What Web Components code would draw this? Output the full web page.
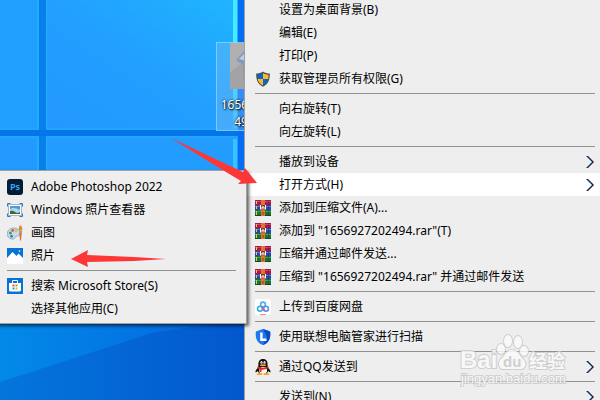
<!DOCTYPE html>
<html lang="zh-CN">
<head>
<meta charset="utf-8">
<title>打开方式</title>
<style>
  body {
    margin: 0;
    font-family: "Noto Sans", "Noto Sans CJK SC", sans-serif;
    font-size: 12px;
  }
</style>
</head>
<body>
<desktop-screen>
  <desktop-file slot="file" name="1656927202494.jpg"></desktop-file>

  <context-menu slot="menu" label="文件菜单">
    <menu-item>设置为桌面背景(B)</menu-item>
    <menu-item>编辑(E)</menu-item>
    <menu-item>打印(P)</menu-item>
    <menu-item icon="shield">获取管理员所有权限(G)</menu-item>
    <menu-separator></menu-separator>
    <menu-item>向右旋转(T)</menu-item>
    <menu-item>向左旋转(L)</menu-item>
    <menu-separator></menu-separator>
    <menu-item more>播放到设备</menu-item>
    <menu-item more active>打开方式(H)</menu-item>
    <menu-item icon="rar">添加到压缩文件(A)...</menu-item>
    <menu-item icon="rar">添加到 "1656927202494.rar"(T)</menu-item>
    <menu-item icon="rar">压缩并通过邮件发送...</menu-item>
    <menu-item icon="rar">压缩到 "1656927202494.rar" 并通过邮件发送</menu-item>
    <menu-separator></menu-separator>
    <menu-item icon="netdisk">上传到百度网盘</menu-item>
    <menu-separator></menu-separator>
    <menu-item icon="lenovo">使用联想电脑管家进行扫描</menu-item>
    <menu-separator></menu-separator>
    <menu-item icon="qq" more>通过QQ发送到</menu-item>
    <menu-separator></menu-separator>
    <menu-item more>发送到(N)</menu-item>
  </context-menu>

  <context-menu slot="submenu" label="打开方式">
    <menu-item icon="ps">Adobe Photoshop 2022</menu-item>
    <menu-item icon="viewer">Windows 照片查看器</menu-item>
    <menu-item icon="paint">画图</menu-item>
    <menu-item icon="photos">照片</menu-item>
    <menu-separator></menu-separator>
    <menu-item icon="store">搜索 Microsoft Store(S)</menu-item>
    <menu-item>选择其他应用(C)</menu-item>
  </context-menu>

  <red-arrows slot="overlay"></red-arrows>
  <baidu-mark slot="overlay"></baidu-mark>
</desktop-screen>

<script>
const icons = {
  shield: `
    <path d="M8 .5C6 2 3.500 2.500 1.200 2.500C1 9 3 13.500 8 15.700C13 13.500 15 9 14.800 2.500C12.500 2.500 10 2 8 .5Z" fill="#4b4f50"/>
    <path d="M8 2C6.300 3.100 4.500 3.600 2.600 3.700V8H8Z" fill="#0c66c9"/>
    <path d="M8 2C9.700 3.100 11.500 3.600 13.400 3.700V8H8Z" fill="#fdb827"/>
    <path d="M2.600 8C3.200 11 5 13.200 8 14.400V8Z" fill="#fdb827"/>
    <path d="M13.400 8C12.800 11 11 13.200 8 14.400V8Z" fill="#0c66c9"/>`,
  rar: `
    <rect width="16" height="5" y="0" fill="#a51c4b"/>
    <rect width="16" height="1" y="1" fill="#d2416d"/>
    <rect width="16" height="5" y="5" fill="#2b45ae"/>
    <rect width="16" height="1" y="6" fill="#5877dc"/>
    <rect width="16" height="6" y="10" fill="#14743b"/>
    <rect width="16" height="1" y="11" fill="#35a45c"/>
    <rect width="16" height="1" y="15" fill="#0b4d28"/>
    <path d="M1.500 1v3M1.500 6v3M1.500 11v4" stroke="#efc63c"/>
    <path d="M13.500 0v16" stroke="#222" opacity=".3"/>
    <rect x="6" width="4" height="16" fill="#e5722a"/>
    <rect x="5" y="5" width="6" height="5" fill="#8a3a22"/>
    <path d="M5.500 5v4.500M10.500 5v4.500M7 9.500V7h2v2.500" stroke="#fff" fill="none"/>
    <rect x="7" y="12" width="2" height="3" fill="#c9531d"/>`,
  netdisk: `
    <rect width="16" height="16" rx="3" fill="#fff"/>
    <circle cx="8" cy="5.500" r="2.400" fill="none" stroke="#4aaef0" stroke-width="1.600"/>
    <circle cx="5" cy="9.700" r="2.400" fill="none" stroke="#28b3ee" stroke-width="1.600"/>
    <circle cx="11" cy="9.700" r="2.400" fill="none" stroke="#4f94f5" stroke-width="1.600"/>
    <path d="M6.200 7.500L9.800 11.500" stroke="#f25574" stroke-width="1.600"/>
    <path d="M5 15.500h6" stroke="#e98b9b"/>`,
  lenovo: `
    <path d="M8 0L1.500 2.200Q.5 2.600 .7 4C.5 10 2.500 14 8 16C13.500 14 15.500 10 15.300 4Q15.500 2.600 14.500 2.200Z" fill="#1b78f2"/>
    <path d="M8 0L14.500 2.200Q15.500 2.600 15.300 4C15.500 10 13.500 14 8 16L12 8Z" fill="#0a4cc0"/>
    <path d="M6.400 3.500V10.800H11.500" fill="none" stroke="#fff" stroke-width="2.400"/>`,
  qq: `
    <path d="M3 9Q-.5 11.500 .8 13.500L3 12ZM13 9Q16.500 11.500 15.200 13.500L13 12Z" fill="#111"/>
    <path d="M8 0C4.500 0 3.200 2.600 3.400 6.500L2.500 10C2.500 14 5 15 8 15C11 15 13.500 14 13.500 10L12.600 6.500C12.800 2.600 11.500 0 8 0Z" fill="#111"/>
    <ellipse cx="8" cy="11.500" rx="4" ry="3.400" fill="#fff"/>
    <ellipse cx="6.500" cy="3.600" rx="1.100" ry="1.600" fill="#fff"/>
    <ellipse cx="9.500" cy="3.600" rx="1.100" ry="1.600" fill="#fff"/>
    <circle cx="6.800" cy="3.900" r=".5"/><circle cx="9.200" cy="3.900" r=".5"/>
    <ellipse cx="8" cy="6.200" rx="3.200" ry="1" fill="#f7a51c"/>
    <path d="M2.800 7.300Q8 10.300 13.200 7.300L13.600 9Q8 11.500 6.500 10.500V13H4.500V10Q3 9.600 2.400 9Z" fill="#e5232b"/>
    <ellipse cx="4.600" cy="15" rx="3" ry="1.100" fill="#f7a51c"/>
    <ellipse cx="11.400" cy="15" rx="3" ry="1.100" fill="#f7a51c"/>`,
  ps: `
    <rect width="16" height="16" rx="3" fill="#001d34"/>
    <text x="8" y="11" font-family="Open Sans, sans-serif" font-size="9" font-weight="700" text-anchor="middle" fill="#35a5f8">Ps</text>`,
  viewer: `
    <rect x="1.500" y="2.500" width="13" height="11" fill="#fff" stroke="#aab4bd"/>
    <rect x="3" y="4" width="10" height="8" fill="#4f9bd8"/>
    <path d="M3 7Q7 4.500 13 8V12H3Z" fill="#a9d8ee"/>
    <path d="M3 9Q6 8 8 10T13 10V12H3Z" fill="#356b3c"/>
    <path d="M.5 4.500V1.500H3.500M12.500 1.500H15.500V4.500M.5 11.500V14.500H3.500M12.500 14.500H15.500V11.500" fill="none" stroke="#2c78c4"/>`,
  paint: `
    <path d="M7 3C2.500 3 0 6 .3 9.500C.6 13 3.800 14.500 6.500 14C8.500 13.600 7.500 11.700 9 11.200C11 10.600 12.800 11 13 8.500C13.200 5 10.500 3 7 3Z" fill="#c4dcec" stroke="#7da3bd" stroke-width=".8"/>
    <circle cx="3.400" cy="8" r="1.500" fill="#45a548"/>
    <circle cx="5.700" cy="5.400" r="1.300" fill="#e04b37"/>
    <circle cx="9" cy="5.600" r="1.400" fill="#f1b52b"/>
    <circle cx="4.600" cy="11.300" r="1.400" fill="#2f78c8"/>
    <path d="M12.600 0Q15.800 1 15.300 5.500L12 5.800Q11.500 3 12.600 0Z" fill="#e28a2e"/>
    <path d="M12 6H15.200L14.800 8H12.300Z" fill="#8da2b0"/>
    <path d="M12.300 8H14.800L14 15.500H13Z" fill="#e66f1e"/>`,
  photos: `
    <rect width="16" height="16" fill="#fff"/>
    <path d="M0 0H16V10L11.500 5.500L9.500 8L5.500 4L0 10Z" fill="#0873d4"/>
    <path d="M0 11L5.500 5L15 15.500H0ZM10 9L11.500 7L16 11.500V15.500Z" fill="#fff"/>
    <circle cx="12.500" cy="3" r=".8" fill="#fff"/>`,
  store: `
    <rect width="16" height="16" fill="#0873d4"/>
    <path d="M5.500 5V2.500H10.500V5" fill="none" stroke="#fff"/>
    <path d="M2 5H14V12Q14 13.500 12.500 13.500H3.500Q2 13.500 2 12Z" fill="#fff"/>
    <path d="M5.500 6.500h2v2h-2z" fill="#ef4f29"/><path d="M8.500 6.500h2v2h-2z" fill="#7cb721"/>
    <path d="M5.500 9.500h2v2h-2z" fill="#18a1e3"/><path d="M8.500 9.500h2v2h-2z" fill="#f7b51a"/>`
};

class DesktopScreen extends HTMLElement {
  constructor() {
    super();
    this.attachShadow({ mode: "open" }).innerHTML = `
      <style>
        :host {
          display: block;
          position: relative;
          height: 100vh;
          overflow: hidden;
          background: #0a6ce0;
        }
        .wallpaper {
          position: absolute;
          inset: 0;
          width: 100%;
          height: 100%;
        }
        ::slotted([slot="file"]) {
          position: absolute;
          left: 216px;
          top: 42px;
        }
        ::slotted([slot="menu"]) {
          position: absolute;
          left: 244px;
          right: -6px;
          top: -7px;
        }
        ::slotted([slot="submenu"]) {
          position: absolute;
          left: -4px;
          width: 251px;
          top: 170px;
          box-sizing: border-box;
          box-shadow: 2px 2px 3px rgba(0, 0, 0, 0.6);
        }
      </style>
      <svg class="wallpaper" viewBox="0 0 600 400" preserveAspectRatio="xMinYMin slice" aria-hidden="true">
        <defs>
          <linearGradient id="glass" x1="0" y1="1" x2="1" y2="0">
            <stop offset="0" stop-color="#2399ff"/>
            <stop offset=".5" stop-color="#229fff"/>
            <stop offset="1" stop-color="#1fb5ff"/>
          </linearGradient>
          <linearGradient id="floor">
            <stop offset="0" stop-color="#028ae8"/>
            <stop offset="1" stop-color="#0560df"/>
          </linearGradient>
          <linearGradient id="dark">
            <stop offset="0" stop-color="#0476dc"/>
            <stop offset="1" stop-color="#0355cd"/>
          </linearGradient>
          <linearGradient id="edge" x1="0" y1="0" x2="0" y2="1">
            <stop offset="0" stop-color="#3fe9ff"/>
            <stop offset=".6" stop-color="#4bf0ff"/>
            <stop offset="1" stop-color="#34bdff"/>
          </linearGradient>
        </defs>
        <rect width="600" height="400" fill="#0a78ea"/>
        <rect width="38" height="129" fill="#209fff"/>
        <rect y="137" width="38" height="100" fill="#239aff"/>
        <rect x="46" width="192" height="129" fill="url(#glass)"/>
        <rect x="46" y="137" width="192" height="100" fill="#239cff"/>
        <path d="M38 0V129M38 137V180M46 0V129M46 137V180" stroke="#22adff" stroke-width="2"/>
        <path d="M0 129H238M0 137H238" stroke="#20a6ff" stroke-width="2"/>
        <rect x="233" width="4" height="128" fill="url(#edge)"/>
        <rect x="233" y="139" width="4" height="40" fill="#34c4ff"/>
        <rect x="39" width="7" height="180" fill="#087fea"/>
        <rect y="130" width="244" height="6" fill="#0675e8"/>
        <rect x="238" width="8" height="180" fill="#066cf3"/>
        <rect y="320" width="260" height="80" fill="url(#floor)"/>
        <path d="M0 382L155 332L260 318V400H0Z" fill="url(#dark)"/>
      </svg>
      <slot name="file"></slot>
      <slot name="menu"></slot>
      <slot name="submenu"></slot>
      <slot name="overlay"></slot>`;
  }
}

class DesktopFile extends HTMLElement {
  constructor() {
    super();
    this.attachShadow({ mode: "open" }).innerHTML = `
      <style>
        :host {
          display: flex;
          flex-direction: column;
          align-items: center;
          box-sizing: border-box;
          width: 78px;
          height: 89px;
          border: 1px solid rgba(150, 215, 255, 0.7);
          background: rgba(110, 185, 245, 0.45);
          color: #fff;
        }
        svg {
          flex: none;
          width: 50px;
          height: 46px;
        }
        p {
          margin: 7px 0 0;
          width: 72px;
          line-height: 17px;
          text-align: center;
          word-break: break-all;
          text-shadow: 1px 1px 2px #000, 0 0 2px #000;
        }
      </style>
      <svg viewBox="0 0 50 46" aria-hidden="true">
        <rect width="50" height="46" fill="#a3a3a6"/>
        <path d="M0 0H34L0 30Z" fill="#b1b0b1"/>
        <path d="M6 17L14 8L24 18L17 22L10 20Z" fill="#8599bd"/>
        <path d="M9 16L14 11L17 18Z" fill="#c3cde0"/>
        <path d="M13 22H20V42H14Z" fill="#8c909e"/>
      </svg>
      <p></p>`;
  }

  connectedCallback() {
    this.shadowRoot.querySelector("p").textContent = this.getAttribute("name");
  }
}

class ContextMenu extends HTMLElement {
  constructor() {
    super();
    this.attachShadow({ mode: "open" }).innerHTML = `
      <style>
        :host {
          display: block;
          border: 1px solid #a0a0a0;
          padding: 4px 2px 3px;
          background: #eee;
        }
        div {
          display: flex;
          flex-direction: column;
        }
      </style>
      <div role="menu"><slot></slot></div>`;
  }

  connectedCallback() {
    this.shadowRoot.querySelector("div").setAttribute("aria-label", this.getAttribute("label"));
  }
}

class MenuSeparator extends HTMLElement {
  constructor() {
    super();
    this.attachShadow({ mode: "open" }).innerHTML = `
      <style>
        :host {
          display: block;
          padding: 3px 8px;
        }
        hr {
          margin: 0;
          border: 0;
          height: 1px;
          background: #919191;
        }
      </style>
      <hr>`;
  }
}

class MenuItem extends HTMLElement {
  constructor() {
    super();
    this.attachShadow({ mode: "open" });
  }

  connectedCallback() {
    const icon = icons[this.getAttribute("icon")] || "";
    const more = this.hasAttribute("more") ? `
      <svg class="more" viewBox="0 0 10 14" aria-hidden="true">
        <path d="M1 1L7 7L1 13" stroke="#5aa5e8"/>
        <path d="M3 1L9 7L3 13" stroke="#b5744f"/>
        <path d="M2 1L8 7L2 13" stroke="#172451"/>
      </svg>` : "";
    this.shadowRoot.innerHTML = `
      <style>
        :host {
          display: block;
        }
        :host([active]) {
          background: #fff;
        }
        button {
          display: flex;
          align-items: center;
          width: 100%;
          height: 23px;
          margin: 0;
          padding: 0 8px;
          border: 0;
          background: none;
          color: #000;
          font: inherit;
          line-height: 20px;
          text-align: left;
          white-space: nowrap;
        }
        .icon {
          flex: none;
          width: 16px;
          height: 16px;
          margin-right: 8px;
        }
        .label {
          flex: 1;
        }
        .more {
          flex: none;
          width: 10px;
          height: 14px;
          fill: none;
        }
      </style>
      <button type="button" role="menuitem">
        <svg class="icon" viewBox="0 0 16 16" aria-hidden="true">${icon}</svg>
        <span class="label"><slot></slot></span>${more}
      </button>`;
  }
}

class RedArrows extends HTMLElement {
  constructor() {
    super();
    this.attachShadow({ mode: "open" }).innerHTML = `
      <style>
        :host {
          display: block;
          position: absolute;
          left: 0;
          top: 0;
          pointer-events: none;
        }
        svg {
          display: block;
          width: 270px;
          height: 280px;
        }
      </style>
      <svg viewBox="0 0 270 280" fill="#fd3735" aria-hidden="true">
        <path d="M171 138L243 172L245 168L257 183L238 184L241 181L216 166Z"/>
        <path d="M166 259L134 257L87 255L88 250L71 259L88 267L87 262L134 261Z"/>
      </svg>`;
  }
}

class BaiduMark extends HTMLElement {
  constructor() {
    super();
    this.attachShadow({ mode: "open" }).innerHTML = `
      <style>
        :host {
          display: block;
          position: absolute;
          right: 30px;
          bottom: 8px;
          pointer-events: none;
        }
        svg {
          display: block;
          width: 110px;
          height: 60px;
          opacity: 0.85;
        }
        text, .paw {
          fill: #fafafa;
          stroke: #cacaca;
          stroke-width: 2px;
          paint-order: stroke;
        }
        text {
          font-family: "Liberation Sans", "Noto Sans CJK SC", sans-serif;
        }
        .brand {
          font-size: 24px;
          font-weight: 700;
        }
        .zh {
          font-size: 18px;
          font-weight: 700;
        }
        .du {
          font-size: 15px;
          font-weight: 700;
          fill: #cacaca;
          stroke: none;
        }
        .url {
          font-size: 13px;
        }
      </style>
      <svg viewBox="0 0 110 60">
        <text class="brand" x="0" y="36">Bai</text>
        <g class="paw">
          <ellipse cx="41" cy="17" rx="4" ry="5"/>
          <ellipse cx="48" cy="9" rx="4" ry="6"/>
          <ellipse cx="58" cy="10" rx="4" ry="6"/>
          <ellipse cx="64" cy="19" rx="4" ry="5"/>
          <path d="M52 18C46 18 46 23 41 27C37 31 39 38 45 37H59C66 38 67 31 63 27C59 23 58 18 52 18Z"/>
        </g>
        <text class="du" x="43" y="35">du</text>
        <text class="zh" x="69" y="36">经验</text>
        <text class="url" x="1" y="51">jingyan.baidu.com</text>
      </svg>`;
  }
}

customElements.define("desktop-screen", DesktopScreen);
customElements.define("desktop-file", DesktopFile);
customElements.define("context-menu", ContextMenu);
customElements.define("menu-separator", MenuSeparator);
customElements.define("menu-item", MenuItem);
customElements.define("red-arrows", RedArrows);
customElements.define("baidu-mark", BaiduMark);
</script>
</body>
</html>
